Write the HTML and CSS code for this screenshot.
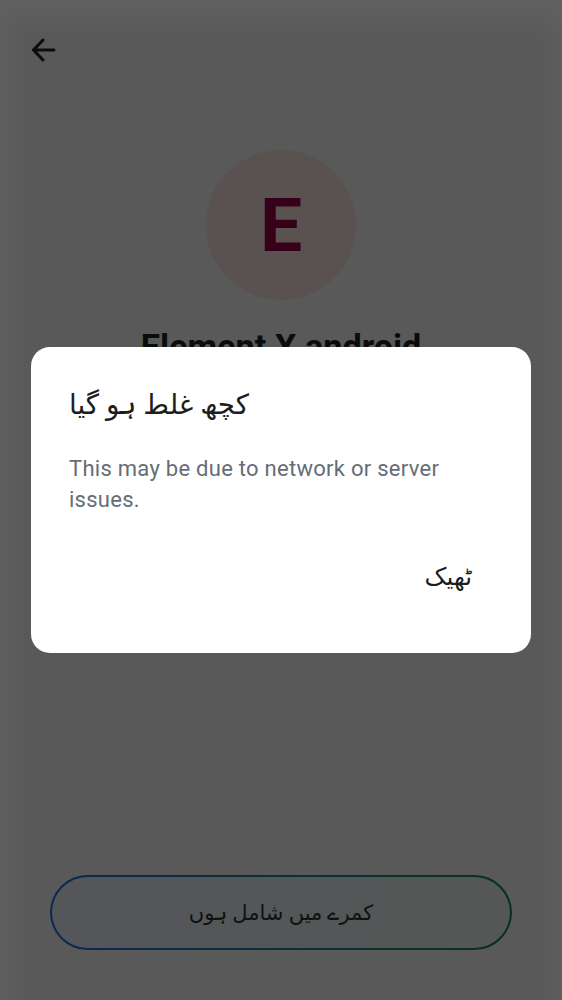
FILE: index.html
```html
<!DOCTYPE html>
<html lang="ur">
<head>
<meta charset="utf-8">
<title>Element X android</title>
<link rel="stylesheet" href="styles.css">
</head>
<body>
<main class="screen">
  <header class="topbar">
    <svg class="back" viewBox="0 0 24 24" aria-hidden="true"><path d="M22 12H2M11 2L1.5 12l9.5 10"/></svg>
  </header>
  <section class="room">
    <div class="avatar">E</div>
    <h1 class="name">Element X android</h1>
  </section>
  <footer class="footer">
    <button class="join" dir="rtl">کمرے میں شامل ہوں</button>
  </footer>
</main>
<div class="scrim">
  <section class="dialog" role="alertdialog">
    <h2 class="title"><span class="urdu" dir="rtl">کچھ غلط ہو گیا</span></h2>
    <p class="message">This may be due to network or server issues.</p>
    <div class="actions"><button class="ok" dir="rtl">ٹھیک</button></div>
  </section>
</div>
</body>
</html>
```

FILE: styles.css
```css
* { box-sizing: border-box; }
body { margin: 0; font-family: Roboto, "DejaVu Sans", sans-serif; }
button { font: inherit; color: inherit; background: none; border: 0; padding: 0; }
.screen {
  height: 1000px;
  display: flex;
  flex-direction: column;
  background:
    linear-gradient(#606060, rgba(96, 96, 96, 0) 34px),
    linear-gradient(90deg, #5e5e5e, rgba(94, 94, 94, 0) 26px, rgba(94, 94, 94, 0) 536px, #5e5e5e),
    #595959;
}
.topbar { height: 150px; padding: 38px 0 0 32px; }
.back { display: block; width: 24px; height: 24px; fill: none; stroke: #0b0c0e; stroke-width: 3; stroke-linecap: round; stroke-linejoin: round; }
.room { display: flex; flex-direction: column; align-items: center; }
.avatar {
  width: 150px; height: 150px; border-radius: 50%;
  background: #595251; color: #37001a;
  font-weight: 700; font-size: 75px; line-height: 150px; text-align: center;
}
.name { margin: 26px 0 0; font-size: 34.2px; line-height: 42px; font-weight: 700; color: #0b0c0e; }
.footer { margin-top: auto; padding: 0 50px 50px; }
.join {
  display: block; width: 462px; height: 75px; border-radius: 38px;
  border: 2px solid transparent;
  background: linear-gradient(100deg, #54565a, #545755) padding-box, linear-gradient(100deg, #0b2850, #0b303d 50%, #0a3328 80%, #082d26) border-box;
  color: #0f1113; font-size: 21px;
}
.scrim { position: absolute; inset: 0; display: flex; align-items: center; justify-content: center; }
.dialog { width: 500px; height: 306px; padding: 37px 38px; border-radius: 19px; background: #fff; }
.title { margin: 0; height: 50px; line-height: 42px; font-size: 27.8px; font-weight: 400; color: #1b1d22; }
.message { margin: 18.5px 0 0; font-size: 22px; line-height: 31.5px; letter-spacing: .27px; color: #656d77; }
.actions { display: flex; justify-content: flex-end; padding: 44px 21px 0 0; }
.ok { font-size: 24.5px; line-height: 34px; color: #1b1d22; }
```
